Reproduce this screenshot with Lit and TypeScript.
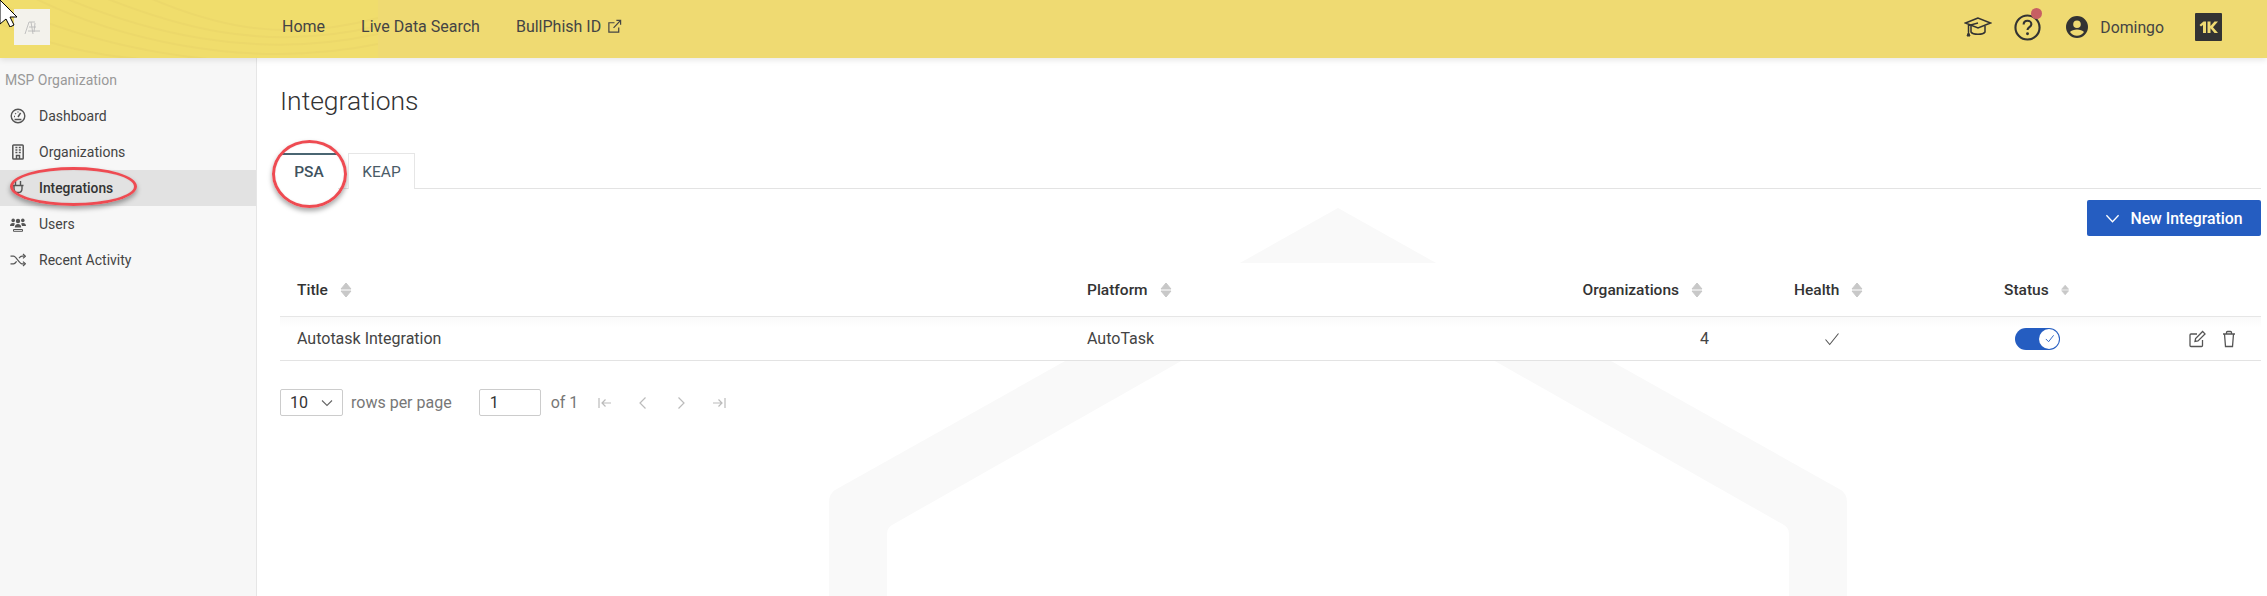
import { LitElement, css, html, svg } from "lit";
import { customElement } from "lit/decorators.js";

const sortIcon = html`<svg class="sort" viewBox="0 0 12 16" aria-hidden="true">
  <path d="M6 1l5 6H1z" fill="#c8c8c8" stroke="#c8c8c8" stroke-linejoin="round"></path>
  <path d="M6 15l5-6H1z" fill="#c8c8c8" stroke="#c8c8c8" stroke-linejoin="round"></path>
</svg>`;

const checkIcon = html`<svg class="check" viewBox="0 0 16 16" aria-hidden="true">
  <path d="M1.5 8.5l4.2 5L14.5 2.5" fill="none" stroke="#555" stroke-width="1.1"></path>
</svg>`;

const navIcons = {
  dashboard: svg`<circle cx="8" cy="8" r="6.8" fill="none" stroke-width="1.4"></circle>
    <path d="M8 9l2.6-4.2" fill="none" stroke-width="1.5"></path>
    <path d="M4 8.5h1M5.2 5.2l.8.8M8 3.4v1.2M4.6 11.5h6.8" fill="none" stroke-width="1.3"></path>`,
  organizations: svg`<rect x="2.8" y="1" width="10.4" height="14" rx=".8" fill="none" stroke-width="1.5"></rect>
    <path d="M5.4 3.5h2M8.8 3.5h2M5.4 6h2M8.8 6h2M5.4 8.5h2M8.8 8.5h2M6.5 15v-3.6h3V15" fill="none" stroke-width="1.5"></path>`,
  integrations: svg`<path d="M5.5 1v4M10.5 1v4M2.5 5.5h11M4 5.5v3.2c0 2.4 1.8 3.8 4 3.8s4-1.4 4-3.8V5.5M8 12.5V15" fill="none" stroke-width="1.4"></path>`,
  users: svg`<circle cx="3.2" cy="4.4" r="1.8" stroke="none"></circle><circle cx="12.8" cy="4.4" r="1.8" stroke="none"></circle>
    <circle cx="8" cy="5" r="2.2" stroke="none"></circle>
    <path d="M0 10c0-2 1.2-3 3-3 1 0 1.6.3 2 .8C4.5 8.5 4 9.2 4 10zM16 10c0-2-1.200-3-3-3-1 0-1.600.3-2 .8.5.7 1 1.400 1 2.200z" stroke="none"></path>
    <path d="M4.800 11.500c0-2.300 1.200-3.500 3.200-3.500s3.200 1.200 3.200 3.500z" stroke="none"></path>
    <path d="M3.500 13.500h9v1.800h-9z" fill="none" stroke-width="1"></path>`,
  activity: svg`<path d="M.5 4.200h3c2.800 0 5.500 7.600 8.500 7.600h2.500M.5 11.800h3c1.200 0 2.200-1 3.100-2.400M9 6.200c.9-1.100 1.900-2 3-2h2.500" fill="none" stroke-width="1.200"></path>
    <path d="M13 2l2.400 2.200L13 6.400M13 9.600l2.400 2.200L13 14" fill="none" stroke-width="1.200"></path>`,
};

@customElement("app-root")
export class AppRoot extends LitElement {
  static override styles = css`
    :host {
      display: block;
      position: relative;
      width: 100%;
      height: 596px;
      overflow: hidden;
      background: #fff;
      color: #333;
      font-family: Roboto, "Liberation Sans", sans-serif;
      font-size: 14px;
    }
    .pointer {
      position: absolute;
      left: 0;
      top: 0;
      width: 19px;
      height: 27px;
      z-index: 5;
    }
    .topbar {
      position: relative;
      z-index: 2;
      display: flex;
      align-items: center;
      box-sizing: border-box;
      height: 58px;
      padding-bottom: 4px;
      background: #efda72;
      box-shadow: 0 2px 6px rgba(0, 0, 0, 0.1);
      color: #444;
    }
    .waves {
      position: absolute;
      left: 0;
      top: 0;
      width: 378px;
      height: 58px;
    }
    .logo {
      position: relative;
      display: flex;
      align-items: center;
      justify-content: center;
      width: 36px;
      height: 36px;
      margin: 0 232px 0 14px;
      background: #f3f2ec;
    }
    .logo svg {
      width: 18px;
      height: 15px;
    }
    .links {
      position: relative;
      display: flex;
      gap: 36px;
      margin-bottom: 2px;
      font-size: 16px;
    }
    .links a {
      display: flex;
      align-items: center;
      gap: 6px;
    }
    .links svg {
      width: 15px;
      height: 15px;
    }
    .spacer {
      flex: 1;
    }
    .tools {
      display: flex;
      align-items: center;
      margin-right: 45px;
    }
    .cap {
      width: 28px;
      height: 20px;
      margin-right: 22px;
    }
    .help {
      position: relative;
      width: 27px;
      height: 27px;
      margin-right: 24px;
    }
    .help svg {
      display: block;
      width: 27px;
      height: 27px;
    }
    .dot {
      position: absolute;
      top: -6px;
      right: -1px;
      width: 11px;
      height: 11px;
      border-radius: 50%;
      background: #c75f63;
    }
    .avatar {
      width: 24px;
      height: 24px;
      margin-right: 11px;
    }
    .name {
      font-size: 15.8px;
      margin-right: 31px;
    }
    .brand {
      width: 27px;
      height: 28px;
    }
    .body {
      display: flex;
      height: 538px;
    }
    .side {
      flex: none;
      box-sizing: border-box;
      width: 257px;
      padding-top: 4px;
      background: #f7f7f7;
      border-right: 1px solid #e6e6e6;
    }
    .org {
      height: 36px;
      line-height: 36px;
      padding-left: 5px;
      color: #999;
    }
    .item {
      position: relative;
      display: flex;
      align-items: center;
      height: 36px;
      padding-left: 10px;
      color: #444;
    }
    .item.active {
      background: #e2e2e2;
      color: #333;
      font-size: 13.8px;
      font-weight: 500;
    }
    .item svg {
      flex: none;
      width: 16px;
      height: 16px;
      margin-right: 13px;
      fill: #555;
      stroke: #555;
    }
    .circled {
      position: absolute;
      border: 3px solid #ee4b52;
      border-radius: 50%;
      box-shadow: 0 3px 5px rgba(0, 0, 0, 0.35), inset 0 0 2px rgba(0, 0, 0, 0.1);
      box-sizing: border-box;
      pointer-events: none;
    }
    .item .circled {
      left: 10px;
      top: -3px;
      width: 127px;
      height: 39px;
    }
    .main {
      position: relative;
      flex: 1;
      min-width: 0;
      padding: 0 6px 0 23px;
    }
    .mark {
      position: absolute;
      left: 0;
      top: 0;
      width: 2010px;
      height: 538px;
    }
    .content {
      position: relative;
    }
    h1 {
      margin: 0;
      padding-top: 26px;
      height: 43px;
      line-height: 34px;
      font-size: 26.5px;
      font-weight: 300;
      color: #333;
    }
    .tabs {
      display: flex;
      gap: 10px;
      height: 36px;
      margin-top: 26px;
      box-sizing: border-box;
      border-bottom: 1px solid #e3e3e3;
      color: #4a5b68;
      font-size: 15.5px;
    }
    .tab {
      position: relative;
      display: flex;
      align-items: center;
      justify-content: center;
      box-sizing: border-box;
      height: 36px;
      background: #fff;
      border: 1px solid #e6e6e6;
      border-bottom: none;
    }
    .tab.psa {
      width: 58px;
      border: none;
      border-top: 2px solid #4a6572;
      font-weight: 500;
      color: #40525e;
    }
    .tab.keap {
      width: 67px;
    }
    .tab .circled {
      left: -8px;
      top: -15px;
      width: 75px;
      height: 68px;
    }
    .actions {
      display: flex;
      justify-content: flex-end;
      padding-top: 11px;
      height: 38px;
    }
    .new {
      display: flex;
      align-items: center;
      justify-content: center;
      gap: 10px;
      width: 174px;
      height: 36px;
      border-radius: 2px;
      background: #255dc1;
      color: #fff;
      font-size: 15.8px;
      font-weight: 500;
    }
    .new svg {
      width: 15px;
      height: 15px;
    }
    .row {
      display: grid;
      grid-template-columns: 807px 400px 222px 180px 180px 1fr;
      align-items: center;
      background: #fff;
    }
    .row > * {
      display: flex;
      align-items: center;
    }
    .head {
      height: 53px;
      margin-top: 25px;
      font-size: 15.5px;
      font-weight: 500;
      color: #333;
      border-bottom: 1px solid #e6e6e6;
    }
    .head > div:first-child {
      padding-left: 17px;
    }
    .cells {
      height: 43px;
      border-bottom: 1px solid #e3e3e3;
      background: linear-gradient(#fafafa, #fff 10px);
      font-size: 16px;
      color: #444;
    }
    .cells > div:first-child {
      padding-left: 17px;
    }
    .sort {
      width: 12px;
      height: 16px;
      margin-left: 12px;
    }
    .right {
      justify-content: flex-end;
    }
    .head .orgs {
      padding-right: 6px;
    }
    .cells .count {
      justify-content: flex-end;
    }
    .head .health {
      padding-left: 85px;
    }
    .cells .healthy {
      padding-left: 115px;
    }
    .check {
      width: 16px;
      height: 16px;
    }
    .head .status {
      padding-left: 115px;
    }
    .cells .state {
      padding-left: 126px;
    }
    .toggle {
      display: flex;
      align-items: center;
      justify-content: flex-end;
      box-sizing: border-box;
      width: 45px;
      height: 22px;
      padding-right: 1px;
      border-radius: 11px;
      background: #255dc1;
    }
    .knob {
      display: flex;
      align-items: center;
      justify-content: center;
      width: 20px;
      height: 20px;
      border-radius: 50%;
      background: #fff;
    }
    .knob svg {
      width: 11px;
      height: 11px;
    }
    .edit {
      justify-content: flex-end;
      gap: 14px;
      padding-right: 23px;
    }
    .edit svg {
      width: 18px;
      height: 18px;
    }
    .pager {
      display: flex;
      align-items: center;
      margin-top: 28px;
      height: 27px;
      font-size: 16px;
      color: #777;
    }
    .select,
    .page {
      display: flex;
      align-items: center;
      box-sizing: border-box;
      height: 27px;
      background: #fff;
      border: 1px solid #ccc;
      border-radius: 2px;
      color: #333;
    }
    .select {
      width: 63px;
      padding-left: 9px;
      justify-content: space-between;
      padding-right: 9px;
      margin-right: 8px;
    }
    .select svg {
      width: 12px;
      height: 12px;
    }
    .page {
      width: 62px;
      padding-left: 10px;
      margin: 0 10px 0 27px;
    }
    .nav {
      width: 16px;
      height: 16px;
      margin-left: 22px;
    }
    .nav.first {
      margin-left: 19px;
    }
  `;

  private navItem(label: string, icon: unknown, active = false) {
    return html`<div class="item ${active ? "active" : ""}">
      <svg viewBox="0 0 16 16" aria-hidden="true">${icon}</svg>
      <span>${label}</span>
      ${active ? html`<div class="circled"></div>` : ""}
    </div>`;
  }

  private pagerIcon(d: string, first = false) {
    return html`<svg class="nav ${first ? "first" : ""}" viewBox="0 0 16 16" aria-hidden="true">
      <path d=${d} fill="none" stroke="#bbb" stroke-width="1.2"></path>
    </svg>`;
  }

  override render() {
    return html`
      <svg class="pointer" viewBox="0 0 19 27" aria-hidden="true">
        <path d="M0 0l17 17h-7l4 8-4 2-4-8-6 5z" fill="#fff" stroke="#000" stroke-width="1"></path>
      </svg>
      <header class="topbar">
        <svg class="waves" viewBox="0 0 378 58" aria-hidden="true">
          <rect width="378" height="58" fill="#f0dd6c"></rect>
          <g fill="none" stroke="#ecd86a" stroke-width="2">
            <path d="M60 -4C140 30 250 62 378 34"></path>
            <path d="M100 -4C170 24 260 54 378 26"></path>
            <path d="M145 -4C200 20 275 46 378 18"></path>
            <path d="M30 -4C110 36 240 72 378 44"></path>
            <path d="M0 4C90 44 200 70 330 60"></path>
            <path d="M0 24C50 46 100 58 160 60"></path>
          </g>
        </svg>
        <div class="logo">
          <svg viewBox="0 0 18 15" aria-hidden="true">
            <path d="M2 14L6 2h6M6 7h7M8 2l2 12M12 3l-1 9M5 11h12" fill="none" stroke="#bbb" stroke-width=".9"></path>
          </svg>
        </div>
        <nav class="links">
          <a>Home</a>
          <a>Live Data Search</a>
          <a>BullPhish ID
            <svg viewBox="0 0 16 16" aria-hidden="true">
              <path d="M12.5 9v5H2V4h6M7 9.5L14.5 1.5M10 1.5h4.5V6" fill="none" stroke="#444" stroke-width="1.3"></path>
            </svg>
          </a>
        </nav>
        <div class="spacer"></div>
        <div class="tools">
          <svg class="cap" viewBox="0 0 28 20" aria-hidden="true">
            <path d="M14 1L1.5 6 14 11l12.500-5z" fill="none" stroke="#333" stroke-width="1.5"></path>
            <path d="M7 9v6c2 3 12 3 14 0V9M14 6L4.500 8.500V15" fill="none" stroke="#333" stroke-width="1.5"></path>
            <path d="M3 19l1.500-4 1.500 4z" fill="#333" stroke="#333"></path>
          </svg>
          <div class="help">
            <svg viewBox="0 0 28 28" aria-hidden="true">
              <circle cx="14" cy="14" r="12.5" fill="none" stroke="#333" stroke-width="2.2"></circle>
              <path d="M10 11c0-2.500 1.800-4 4-4s4 1.500 4 3.600c0 3-4 3-4 6" fill="none" stroke="#333" stroke-width="2.2"></path>
              <circle cx="14" cy="20.5" r="1.5" fill="#333"></circle>
            </svg>
            <span class="dot"></span>
          </div>
          <svg class="avatar" viewBox="0 0 24 24" aria-hidden="true">
            <path d="M12 1a11 11 0 100 22 11 11 0 000-22zm0 4.500a3.800 3.800 0 110 7.600 3.800 3.800 0 010-7.600zm0 15.300c-2.900 0-5.500-1.400-7-3.700.9-1.800 4.600-2.700 7-2.700s6.100.9 7 2.700c-1.500 2.300-4.100 3.700-7 3.700z" fill="#333"></path>
          </svg>
          <span class="name">Domingo</span>
          <svg class="brand" viewBox="0 0 27 28" aria-hidden="true">
            <rect width="27" height="28" rx="1" fill="#333"></rect>
            <path d="M4.500 12l4-3.500h2.500V20H8v-8l-2 1.500zM12.500 8.500h3v4.500l4-4.500h3.500l-5 5.700 5 5.800h-3.500l-4-4.800V20h-3z" fill="#efda72"></path>
          </svg>
        </div>
      </header>
      <div class="body">
        <aside class="side">
          <div class="org">MSP Organization</div>
          ${this.navItem("Dashboard", navIcons.dashboard)}
          ${this.navItem("Organizations", navIcons.organizations)}
          ${this.navItem("Integrations", navIcons.integrations, true)}
          ${this.navItem("Users", navIcons.users)}
          ${this.navItem("Recent Activity", navIcons.activity)}
        </aside>
        <main class="main">
          <svg class="mark" viewBox="0 0 2010 538" aria-hidden="true">
            <path d="M1081 150L578 432Q572 436 572 444V538H630V476Q630 470 635 467L1081 214 1527 467Q1532 470 1532 476V538H1590V444Q1590 436 1584 432Z" fill="#f9f9f9"></path>
          </svg>
          <div class="content">
            <h1>Integrations</h1>
            <div class="tabs">
              <div class="tab psa">PSA<div class="circled"></div></div>
              <div class="tab keap">KEAP</div>
            </div>
            <div class="actions">
              <div class="new">
                <svg viewBox="0 0 16 16" aria-hidden="true">
                  <path d="M1.5 4.500L8 11.500l6.500-7" fill="none" stroke="#fff" stroke-width="1.4"></path>
                </svg>
                New Integration
              </div>
            </div>
            <div class="row head">
              <div>Title${sortIcon}</div>
              <div>Platform${sortIcon}</div>
              <div class="right orgs">Organizations${sortIcon}</div>
              <div class="health">Health${sortIcon}</div>
              <div class="status">Status${sortIcon}</div>
              <div></div>
            </div>
            <div class="row cells">
              <div>Autotask Integration</div>
              <div>AutoTask</div>
              <div class="count">4</div>
              <div class="healthy">${checkIcon}</div>
              <div class="state">
                <div class="toggle">
                  <div class="knob">
                    <svg viewBox="0 0 12 12" aria-hidden="true">
                      <path d="M2 6.500l3 3L10.500 2.500" fill="none" stroke="#255dc1" stroke-width="1"></path>
                    </svg>
                  </div>
                </div>
              </div>
              <div class="edit">
                <svg viewBox="0 0 18 18" aria-hidden="true">
                  <path d="M14.500 10v5.500a1 1 0 01-1 1H3a1 1 0 01-1-1V5a1 1 0 011-1h6M7 11.500l.6-3L14.600 1.500l2.400 2.400-7 7z" fill="none" stroke="#555" stroke-width="1.3"></path>
                </svg>
                <svg viewBox="0 0 18 18" aria-hidden="true">
                  <path d="M3 4h12M4.500 4l1 12.500h7l1-12.500M6.500 4V2.500a1 1 0 011-1h3a1 1 0 011 1V4" fill="none" stroke="#555" stroke-width="1.3"></path>
                </svg>
              </div>
            </div>
            <div class="pager">
              <div class="select">
                <span>10</span>
                <svg viewBox="0 0 12 12" aria-hidden="true">
                  <path d="M1 3.500L6 8.500l5-5" fill="none" stroke="#666" stroke-width="1.1"></path>
                </svg>
              </div>
              <span>rows per page</span>
              <div class="page">1</div>
              <span>of 1</span>
              ${this.pagerIcon("M2 3v10M14 8H5M8.500 4.500L5 8l3.500 3.500", true)}
              ${this.pagerIcon("M10.500 2.500L5 8l5.500 5.500")}
              ${this.pagerIcon("M5.500 2.500L11 8l-5.500 5.500")}
              ${this.pagerIcon("M14 3v10M2 8h9M7.500 4.500L11 8l-3.500 3.500")}
            </div>
          </div>
        </main>
      </div>
    `;
  }
}
